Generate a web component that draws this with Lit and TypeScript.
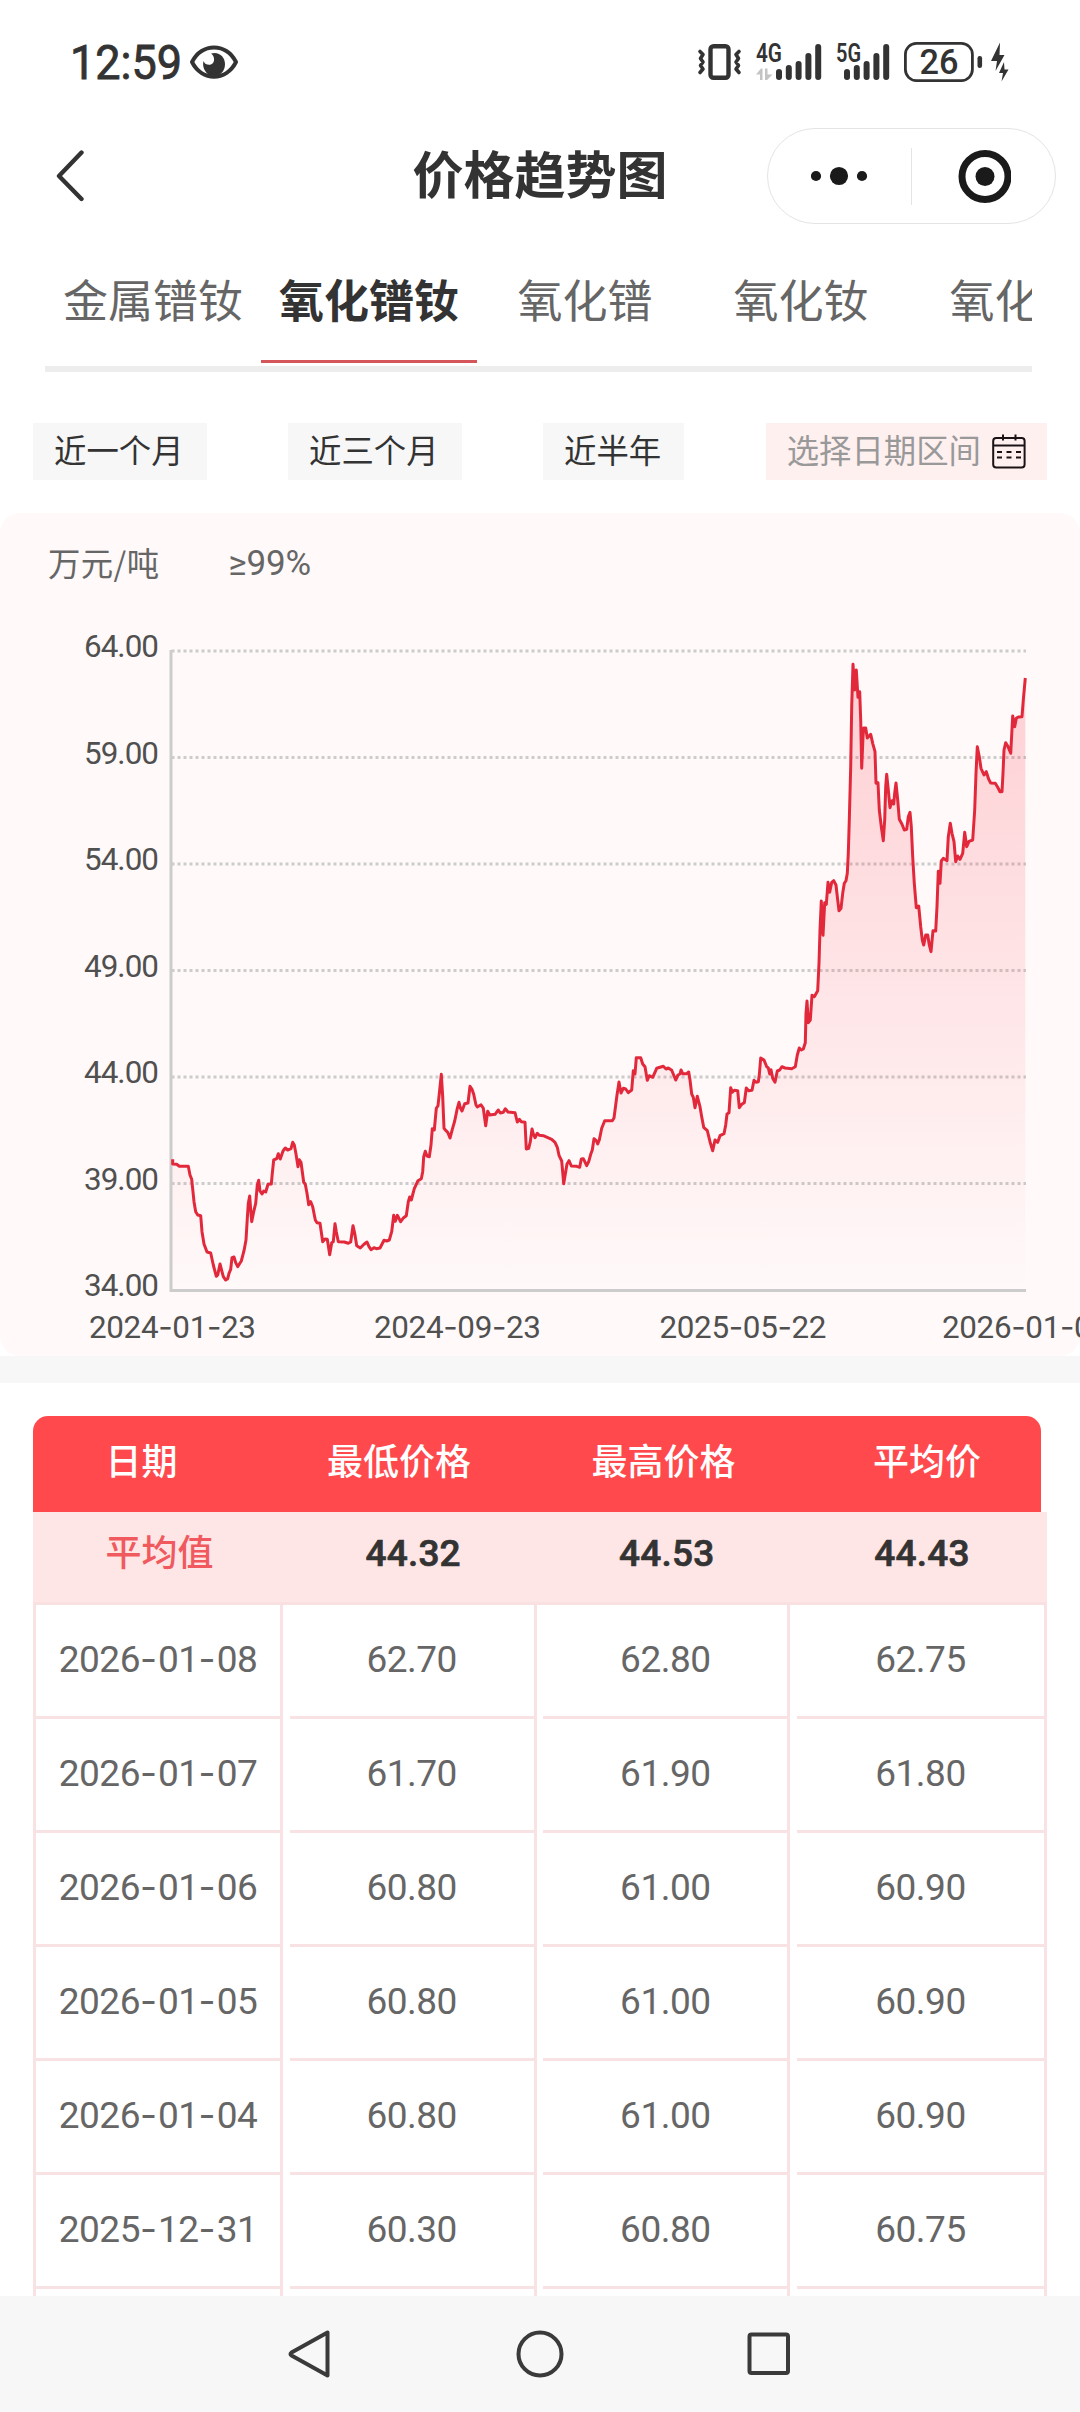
import { LitElement, html, svg, css } from "lit";
import { customElement, property } from "lit/decorators.js";
import { classMap } from "lit/directives/class-map.js";

const INK = "#333333";

/* Height of each sample above the baseline is (top - y) / 3, its x is (x + shift) / 3. */
interface Segment {
  shift: number;
  top: number;
  points: number[];
}

const SEGMENTS: Segment[] = [
  {
    shift: -33,
    top: 690,
    points: [
      38, 298, 38, 312, 50, 313, 58, 319, 85, 319, 90, 345, 95, 358, 102, 425, 107, 455, 113, 465, 122, 467,
      126, 515, 132, 552, 141, 576, 152, 579, 160, 615, 169, 649, 173, 645, 180, 612, 190, 650, 197, 660,
      203, 656, 207, 640, 212, 628, 216, 593, 222, 591, 227, 608, 233, 620, 244, 603, 252, 572, 258, 540,
      262, 475, 265, 430, 269, 408, 272, 450, 275, 485, 281, 455, 287, 430, 292, 375, 296, 361, 300, 393,
      306, 402, 311, 393, 317, 396, 324, 373, 334, 372, 337, 340, 341, 300, 350, 296, 355, 281, 361, 297,
      369, 273, 376, 264, 383, 270, 393, 266, 398, 247, 403, 255, 408, 282, 414, 320, 418, 299, 423, 307,
      427, 335, 431, 367, 436, 373, 441, 400, 446, 434, 452, 425, 458, 440, 466, 480, 471, 488, 480, 490,
      488, 545, 495, 537, 502, 538, 509, 584, 515, 548, 520, 545, 525, 491, 529, 515, 535, 545, 553, 546,
      565, 550, 572, 546, 579, 497, 584, 520, 590, 557, 601, 564, 612, 553, 621, 546, 627, 560, 633, 569,
      642, 563, 649, 566, 660, 564, 672, 541, 680, 543, 688, 540, 695, 515, 701, 466, 706, 484, 712, 466,
      722, 485, 730, 474, 739, 467, 745, 425, 749, 411, 754, 420, 763, 386, 774, 362, 784, 356, 788, 335,
      791, 290, 796, 274, 801, 288, 808, 290, 813, 255, 817, 206, 823, 210, 829, 145, 834, 137, 839, 90,
      844, 43, 848, 110, 852, 205, 858, 212, 863, 217, 870, 234, 877, 208, 884, 183, 892, 145, 897, 127,
      901, 143, 906, 153, 914, 131, 924, 129, 930, 79, 936, 88, 941, 103, 948, 135, 952, 141, 958, 137,
    ],
  },
  {
    shift: 927,
    top: 870,
    points: [
      3, 314, 10, 325, 17, 377, 23, 334, 29, 345, 45, 343, 55, 330, 61, 339, 70, 337, 76, 326, 84, 336,
      105, 338, 112, 366, 118, 358, 124, 365, 135, 367, 139, 447, 146, 445, 151, 425, 156, 387, 160, 402,
      165, 413, 172, 400, 178, 406, 190, 407, 215, 418, 225, 427, 232, 442, 237, 466, 245, 483, 251, 551,
      257, 515, 261, 492, 267, 482, 274, 498, 290, 499, 299, 502, 304, 477, 310, 476, 320, 497, 326, 485,
      332, 463, 337, 450, 342, 416, 349, 422, 353, 432, 358, 420, 365, 385, 374, 362, 397, 362, 402, 354,
      407, 315, 411, 285, 417, 246, 423, 279, 430, 265, 437, 267, 445, 278, 455, 270, 460, 212, 465, 222,
      469, 173, 482, 173, 488, 192, 495, 200, 502, 241, 508, 227, 518, 232, 530, 205, 550, 199, 558, 207,
      565, 204, 575, 211, 587, 240, 594, 225, 600, 222, 603, 210, 608, 221, 620, 221, 626, 216, 630, 240,
      635, 282, 640, 292, 645, 323, 652, 289, 660, 320, 665, 350, 671, 382, 682, 392, 690, 425, 698, 452,
      705, 420, 713, 427, 720, 407, 732, 401, 737, 375, 741, 342, 747, 338, 752, 263, 757, 277, 763, 271,
      773, 272, 778, 323, 785, 313, 793, 308, 799, 264, 806, 272, 816, 271, 822, 241, 828, 247, 835, 245,
      838, 225, 842, 174, 852, 180, 860, 200, 865, 204, 869, 222, 873, 209, 878, 235, 885, 247, 892, 213,
      899, 210, 906, 200, 915, 204, 935, 206, 946, 200, 952, 165, 958, 144,
    ],
  },
  {
    shift: 1767,
    top: 1950,
    points: [
      124, 1230, 130, 1227, 136, 1208, 138, 1120, 141, 1083, 145, 1148, 151, 1140, 156, 1066, 163, 1070,
      173, 1052, 177, 970, 180, 870, 184, 783, 189, 886, 194, 788, 199, 793, 204, 727, 209, 757, 215, 727,
      221, 722, 228, 735, 233, 780, 237, 812, 243, 805, 248, 760, 253, 730, 258, 722, 262, 700, 265, 640,
      268, 540, 272, 380, 275, 200, 279, 73, 284, 150, 289, 90, 294, 172, 299, 155, 302, 240, 305, 385,
      309, 290, 311, 264, 317, 264, 322, 294, 332, 283, 338, 310, 345, 335, 348, 430, 354, 428, 358, 510,
      364, 560, 370, 602, 374, 540, 377, 440, 380, 403, 385, 450, 390, 503, 396, 482, 401, 492, 404, 460,
      408, 429, 413, 480, 418, 538, 426, 553, 433, 570, 440, 568, 445, 530, 450, 517, 454, 560, 458, 650,
      463, 730, 469, 803, 476, 798, 482, 860, 487, 900, 491, 915, 497, 885, 503, 885, 508, 915, 513, 935,
      519, 872, 527, 873, 531, 800, 535, 694, 540, 730, 544, 663, 550, 655, 561, 662, 565, 590, 571, 550,
      576, 580, 582, 605, 587, 665, 593, 648, 600, 658, 608, 640, 614, 577, 620, 620, 627, 604, 638, 600,
      644, 510, 648, 400, 652, 320, 658, 350, 663, 385, 672, 405, 679, 395, 686, 418, 692, 429, 706, 430,
      713, 442, 720, 455, 726, 455, 729, 400, 732, 330, 737, 308, 743, 318, 752, 340, 758, 228, 764, 260,
      769, 235, 775, 231, 786, 230, 790, 180, 796, 114,
    ],
  },
];

const PLOT = { left: 171, right: 1025.5, top: 651, bottom: 1290 };

const dated = (value: string) =>
  value.split("-").map((part, i) => (i ? html`<span class="dash">-</span>${part}` : part));

@customElement("status-bar")
export class StatusBar extends LitElement {
  static styles = css`
    :host {
      display: flex;
      align-items: center;
      justify-content: space-between;
      height: 124px;
      padding: 0 71px 0 70px;
      box-sizing: border-box;
    }
    .group {
      display: flex;
      align-items: center;
    }
    svg {
      display: block;
      overflow: visible;
      font-family: Roboto, "Noto Sans", sans-serif;
    }
    .clock {
      margin-right: 7px;
    }
    .vibrate {
      margin-right: 14px;
    }
    .signal {
      margin-right: 14px;
    }
    .battery {
      margin-right: 8px;
    }
  `;

  private signal(label: string, width: number, first: number, labelWidth: number, data: boolean) {
    const tops = [25, 21, 17, 9, 0];
    return html`<svg class="signal" width=${width} height="36" viewBox="0 0 ${width} 36" fill=${INK}>
      <text x="0" y="18" font-size="25" font-weight="600" textLength=${labelWidth} lengthAdjust="spacingAndGlyphs">${label}</text>
      ${data
        ? svg`<path d="M0 30.5L5 24.5H6.5V36H4V30.5ZM9 24.5H11.500V30.500H16.500L11 36H9Z" fill="#c4c4c4" />`
        : null}
      ${tops.map((t, i) => svg`<rect x=${first + i * 9.8} y=${t} width="6" height=${36 - t} rx="3" />`)}
    </svg>`;
  }

  render() {
    return html`
      <div class="group">
        <svg class="clock" width="113" height="56" viewBox="0 0 113 56" fill=${INK}>
          <text x="0" y="45" font-size="48.500" font-weight="400" stroke=${INK} stroke-width="0.900" textLength="112" lengthAdjust="spacingAndGlyphs">12:59</text>
        </svg>
        <svg width="48" height="34" viewBox="0 0 48 34">
          <path d="M2 17C12 -2.500 36 -2.500 46 17C36 36.500 12 36.500 2 17Z" fill="none" stroke=${INK} stroke-width="4" stroke-linejoin="round" />
          <path d="M21 8.500C29 6 35 12 35 19C35 25 32 28 29 30H19C15 27 12 22 13.500 16C15 20 20 21 22.500 18.500C25 16 24.500 11 21 8.500Z" fill=${INK} />
        </svg>
      </div>
      <div class="group">
        <svg class="vibrate" width="45" height="36" viewBox="0 0 45 36" fill="none" stroke=${INK} stroke-linejoin="round" stroke-linecap="round">
          <rect x="13.500" y="2.200" width="18" height="31.600" rx="3" stroke-width="4.400" />
          <path d="M3 7.500L6 10.500L3.500 14.500L6 18L3.500 21.500L6 25L3 28.500M42 7.500L39 10.500L41.500 14.500L39 18L41.500 21.500L39 25L42 28.500" stroke-width="3.600" />
        </svg>
        ${this.signal("4G", 66, 20, 26, true)} ${this.signal("5G", 54, 8, 25, false)}
        <svg class="battery" width="79" height="40" viewBox="0 0 79 40" fill=${INK}>
          <rect x="1.400" y="1.400" width="67" height="37.200" rx="11" fill="none" stroke=${INK} stroke-width="2.800" />
          <text x="15.500" y="32.300" font-size="34.500" font-weight="500" textLength="39" lengthAdjust="spacingAndGlyphs">26</text>
          <rect x="73.500" y="14" width="4.600" height="12" rx="2.200" />
        </svg>
        <svg width="18" height="40" viewBox="0 0 18 40" fill=${INK}>
          <path d="M9 0.500L0 19H6L4.500 29L13.500 13H8.500Z" />
          <path d="M13 20L8 31H12L10.500 39.500L17.500 27.500H13.500Z" />
        </svg>
      </div>
    `;
  }
}

@customElement("title-bar")
export class TitleBar extends LitElement {
  static styles = css`
    :host {
      display: grid;
      grid-template-columns: 313px 454px 289px;
      align-items: center;
      height: 104px;
      font-family: "Noto Sans CJK SC", sans-serif;
    }
    svg {
      display: block;
    }
    .back {
      margin-left: 56px;
    }
    .title {
      margin: 0;
      padding-bottom: 9px;
      text-align: center;
      font-size: 51px;
      line-height: 60px;
      font-weight: 700;
      color: #333;
    }
    .capsule {
      box-sizing: border-box;
      width: 289px;
      height: 96px;
      border: 1px solid #e4e4e4;
      border-radius: 48px;
      display: grid;
      grid-template-columns: 143px 1px 143px;
      align-items: center;
      justify-items: center;
    }
    .divider {
      width: 1px;
      height: 57px;
      background: #e4e4e4;
    }
  `;

  render() {
    return html`
      <svg class="back" width="30" height="52" viewBox="0 0 30 52">
        <path d="M25.500 2.500L3 26L25.500 49" fill="none" stroke=${INK} stroke-width="4.400" stroke-linecap="round" stroke-linejoin="round" />
      </svg>
      <h1 class="title">价格趋势图</h1>
      <div class="capsule">
        <svg width="58" height="20" viewBox="0 0 58 20" fill="#1a1a1a">
          <circle cx="5" cy="10" r="5.100" />
          <circle cx="28" cy="10" r="9.100" />
          <circle cx="51" cy="10" r="5.100" />
        </svg>
        <span class="divider"></span>
        <svg width="54" height="54" viewBox="0 0 54 54">
          <circle cx="28" cy="27.500" r="23" fill="none" stroke="#1a1a1a" stroke-width="7" />
          <circle cx="28" cy="27.500" r="9.500" fill="#1a1a1a" />
        </svg>
      </div>
    `;
  }
}

@customElement("product-tabs")
export class ProductTabs extends LitElement {
  @property({ attribute: false }) items: string[] = [];
  @property({ type: Number }) active = 0;

  static styles = css`
    :host {
      display: flex;
      margin: 0 48px 0 45px;
      height: 144px;
      box-sizing: border-box;
      border-bottom: 6px solid #ededed;
      overflow: hidden;
      font-family: "Noto Sans CJK SC", sans-serif;
    }
    .tab {
      flex: 0 0 216px;
      height: 135px;
      box-sizing: border-box;
      padding-top: 41px;
      border-bottom: 3px solid transparent;
      text-align: center;
      font-size: 45px;
      line-height: 60px;
      color: #666;
      white-space: nowrap;
    }
    .active {
      color: #333;
      font-weight: 700;
      border-bottom-color: #d4565b;
    }
  `;

  render() {
    return this.items.map(
      (item, i) => html`<div class=${classMap({ tab: true, active: i === this.active })}>${item}</div>`,
    );
  }
}

@customElement("range-filter")
export class RangeFilter extends LitElement {
  static styles = css`
    :host {
      display: flex;
      justify-content: space-between;
      margin: 51px 33px 33px;
      font-family: "Noto Sans CJK SC", sans-serif;
      font-size: 32.4px;
      line-height: 51px;
      color: #333;
    }
    .chip {
      height: 57px;
      box-sizing: border-box;
      padding: 0 23px 6px 21px;
      background: #f7f7f7;
      white-space: nowrap;
    }
    .picker {
      display: flex;
      align-items: center;
      gap: 11px;
      padding: 0 21px 6px 21px;
      background: #fff0f0;
      color: #999;
    }
    .calendar {
      display: block;
      margin-top: 6px;
    }
  `;

  render() {
    return html`
      <div class="chip">近一个月</div>
      <div class="chip">近三个月</div>
      <div class="chip">近半年</div>
      <div class="chip picker">
        选择日期区间
        <svg class="calendar" width="34" height="35" viewBox="0 0 34 35" fill="none" stroke="#1a1214" stroke-width="2">
          <rect x="1.200" y="4" width="31.400" height="29.600" rx="3" />
          <path d="M1 11.500H33M11 0.500V6.500M23.500 0.500V6.500" />
          <path d="M5 18H10M14.500 18H19.500M24 18H29M5 23.500H10M14.500 23.500H19.500M24 23.500H29" stroke-width="2.200" />
        </svg>
      </div>
    `;
  }
}

@customElement("price-chart")
export class PriceChart extends LitElement {
  static styles = css`
    :host {
      display: block;
      background: #fff9f9;
      border-radius: 20px;
      overflow: hidden;
      font-family: Roboto, "Noto Sans CJK SC", sans-serif;
    }
    .legend {
      display: flex;
      gap: 69px;
      height: 97px;
      box-sizing: border-box;
      padding: 25px 48px 0;
      font-size: 32.4px;
      line-height: 48px;
      color: #666;
    }
    .unit {
      font-family: "Noto Sans CJK SC", sans-serif;
      letter-spacing: 0.400px;
    }
    .purity {
      font-family: Roboto, "Noto Sans", sans-serif;
      font-size: 35px;
      line-height: 52px;
      letter-spacing: -0.200px;
    }
    .plot {
      display: block;
    }
    .label {
      font-size: 31.400px;
      fill: #505050;
    }
    .dash {
      font-family: Inter, sans-serif;
    }
  `;

  private get line(): string {
    const out: string[] = [];
    for (const { shift, top, points } of SEGMENTS) {
      for (let i = 0; i < points.length; i += 2) {
        const x = PLOT.left + (points[i] + shift) / 3;
        const y = PLOT.bottom - (top - points[i + 1]) / 3;
        out.push(`${x.toFixed(1)} ${y.toFixed(1)}`);
      }
    }
    return `M${out.join("L")}`;
  }

  render() {
    const ticks = ["64.00", "59.00", "54.00", "49.00", "44.00", "39.00", "34.00"];
    const step = (PLOT.bottom - PLOT.top) / (ticks.length - 1);
    const dates: [string, number][] = [
      ["2024-01-23", 89],
      ["2024-09-23", 374],
      ["2025-05-22", 659.5],
      ["2026-01-08", 942],
    ];
    const line = this.line;
    return html`
      <div class="legend"><span class="unit">万元/吨</span><span class="purity">≥99%</span></div>
      <svg class="plot" width="1080" height="746" viewBox="0 610 1080 746">
        <defs>
          <linearGradient id="fade" gradientUnits="userSpaceOnUse" x1="0" y1="664" x2="0" y2="1290">
            <stop offset="0" stop-color="#fa283c" stop-opacity="0.2" />
            <stop offset="1" stop-color="#fa283c" stop-opacity="0" />
          </linearGradient>
        </defs>
        ${ticks.slice(0, -1).map(
          (_, i) => svg`<path d="M171.500 ${PLOT.top + i * step}H1026" stroke="#cccccc" stroke-width="3" stroke-dasharray="3 3" />`,
        )}
        <path d="M171 650V1290.500H1026" fill="none" stroke="#cccccc" stroke-width="3" />
        <path d="${line}V1290H172.600Z" fill="url(#fade)" />
        <path d=${line} fill="none" stroke="#e2293c" stroke-width="3" stroke-linejoin="round" />
        ${ticks.map(
          (t, i) => svg`<text class="label" x="84" y=${PLOT.top + i * step + 6} textLength="75">${t}</text>`,
        )}
        ${dates.map(
          ([d, x]) => svg`<text class="label" x=${x} y="1338" textLength="167">${d
            .split("-")
            .map((p, i) => (i ? svg`<tspan class="dash">-</tspan>${p}` : p))}</text>`,
        )}
      </svg>
    `;
  }
}

@customElement("price-table")
export class PriceTable extends LitElement {
  @property({ attribute: false }) rows: string[][] = [];

  static styles = css`
    :host {
      display: block;
      padding: 33px 33px 0;
      font-family: Roboto, "Noto Sans CJK SC", sans-serif;
      font-size: 36px;
      color: #666;
    }
    .head {
      display: grid;
      grid-template-columns: 217px 298px 231px 262px;
      width: 1008px;
      height: 96px;
      line-height: 95px;
      border-radius: 15px 15px 0 0;
      background: #ff494d;
      color: #fff;
      font-weight: 500;
      text-align: center;
    }
    .shifted {
      padding-left: 34px;
    }
    .row {
      display: grid;
      grid-template-columns: 250px 247px 247px 250px;
      justify-content: space-between;
      text-align: center;
    }
    .average {
      height: 90px;
      line-height: 84px;
      background: #ffe6e6;
      border-bottom: 3px solid #f9e1e2;
      color: #333;
    }
    .name {
      color: #f05a5e;
      font-weight: 500;
      padding-left: 3px;
    }
    .cell {
      box-sizing: border-box;
      height: 114px;
      line-height: 110px;
      border-right: 3px solid #f8e2e3;
      border-bottom: 3px solid #f8e2e3;
      font-size: 37px;
      letter-spacing: -0.5px;
    }
    .cell:first-child {
      border-left: 3px solid #f8e2e3;
    }
    .dash {
      font-family: Inter, sans-serif;
      line-height: 0;
      letter-spacing: 1px;
    }
    .value {
      font-size: 37px;
      font-weight: 500;
      -webkit-text-stroke: 0.7px #333;
      letter-spacing: 0.200px;
    }
  `;

  render() {
    return html`
      <div class="head">
        <span>日期</span><span>最低价格</span><span>最高价格</span><span class="shifted">平均价</span>
      </div>
      <div class="row average">
        <span class="name">平均值</span><span class="value">44.32</span><span class="value">44.53</span><span class="value">44.43</span>
      </div>
      ${this.rows.map(
        (row) => html`<div class="row">${row.map((v) => html`<div class="cell">${dated(v)}</div>`)}</div>`,
      )}
    `;
  }
}

@customElement("system-nav")
export class SystemNav extends LitElement {
  static styles = css`
    :host {
      display: grid;
      grid-template-columns: repeat(3, 229px);
      justify-content: center;
      justify-items: center;
      align-items: center;
      height: 116px;
      background: #f7f7f7;
    }
    svg {
      display: block;
    }
  `;

  render() {
    return html`
      <svg width="50" height="50" viewBox="0 0 50 50" fill="none" stroke="#3a3a3a" stroke-width="4" stroke-linejoin="round">
        <path d="M41.500 3.500V46.500L5.500 26.500Q3.500 25 5.500 23.500Z" />
      </svg>
      <svg width="50" height="50" viewBox="0 0 50 50" fill="none" stroke="#3a3a3a" stroke-width="4">
        <circle cx="25" cy="25" r="21.500" />
      </svg>
      <svg width="50" height="50" viewBox="0 0 50 50" fill="none" stroke="#3a3a3a" stroke-width="4">
        <rect x="5.500" y="5.500" width="38.500" height="38.500" rx="2" />
      </svg>
    `;
  }
}

@customElement("app-root")
export class AppRoot extends LitElement {
  private readonly tabs = ["金属镨钕", "氧化镨钕", "氧化镨", "氧化钕", "氧化铽"];
  private readonly rows = [
    ["2026-01-08", "62.70", "62.80", "62.75"],
    ["2026-01-07", "61.70", "61.90", "61.80"],
    ["2026-01-06", "60.80", "61.00", "60.90"],
    ["2026-01-05", "60.80", "61.00", "60.90"],
    ["2026-01-04", "60.80", "61.00", "60.90"],
    ["2025-12-31", "60.30", "60.80", "60.75"],
    ["", "", "", ""],
  ];

  static styles = css`
    :host {
      display: flex;
      flex-direction: column;
      width: 1080px;
      height: 2412px;
      overflow: hidden;
      background: #fff;
    }
    .page {
      flex: 1;
      min-height: 0;
      overflow: hidden;
    }
    .band {
      height: 27px;
      background: #f7f7f7;
    }
  `;

  render() {
    return html`
      <div class="page">
        <status-bar></status-bar>
        <title-bar></title-bar>
        <product-tabs .items=${this.tabs} .active=${1}></product-tabs>
        <range-filter></range-filter>
        <price-chart></price-chart>
        <div class="band"></div>
        <price-table .rows=${this.rows}></price-table>
      </div>
      <system-nav></system-nav>
    `;
  }
}
